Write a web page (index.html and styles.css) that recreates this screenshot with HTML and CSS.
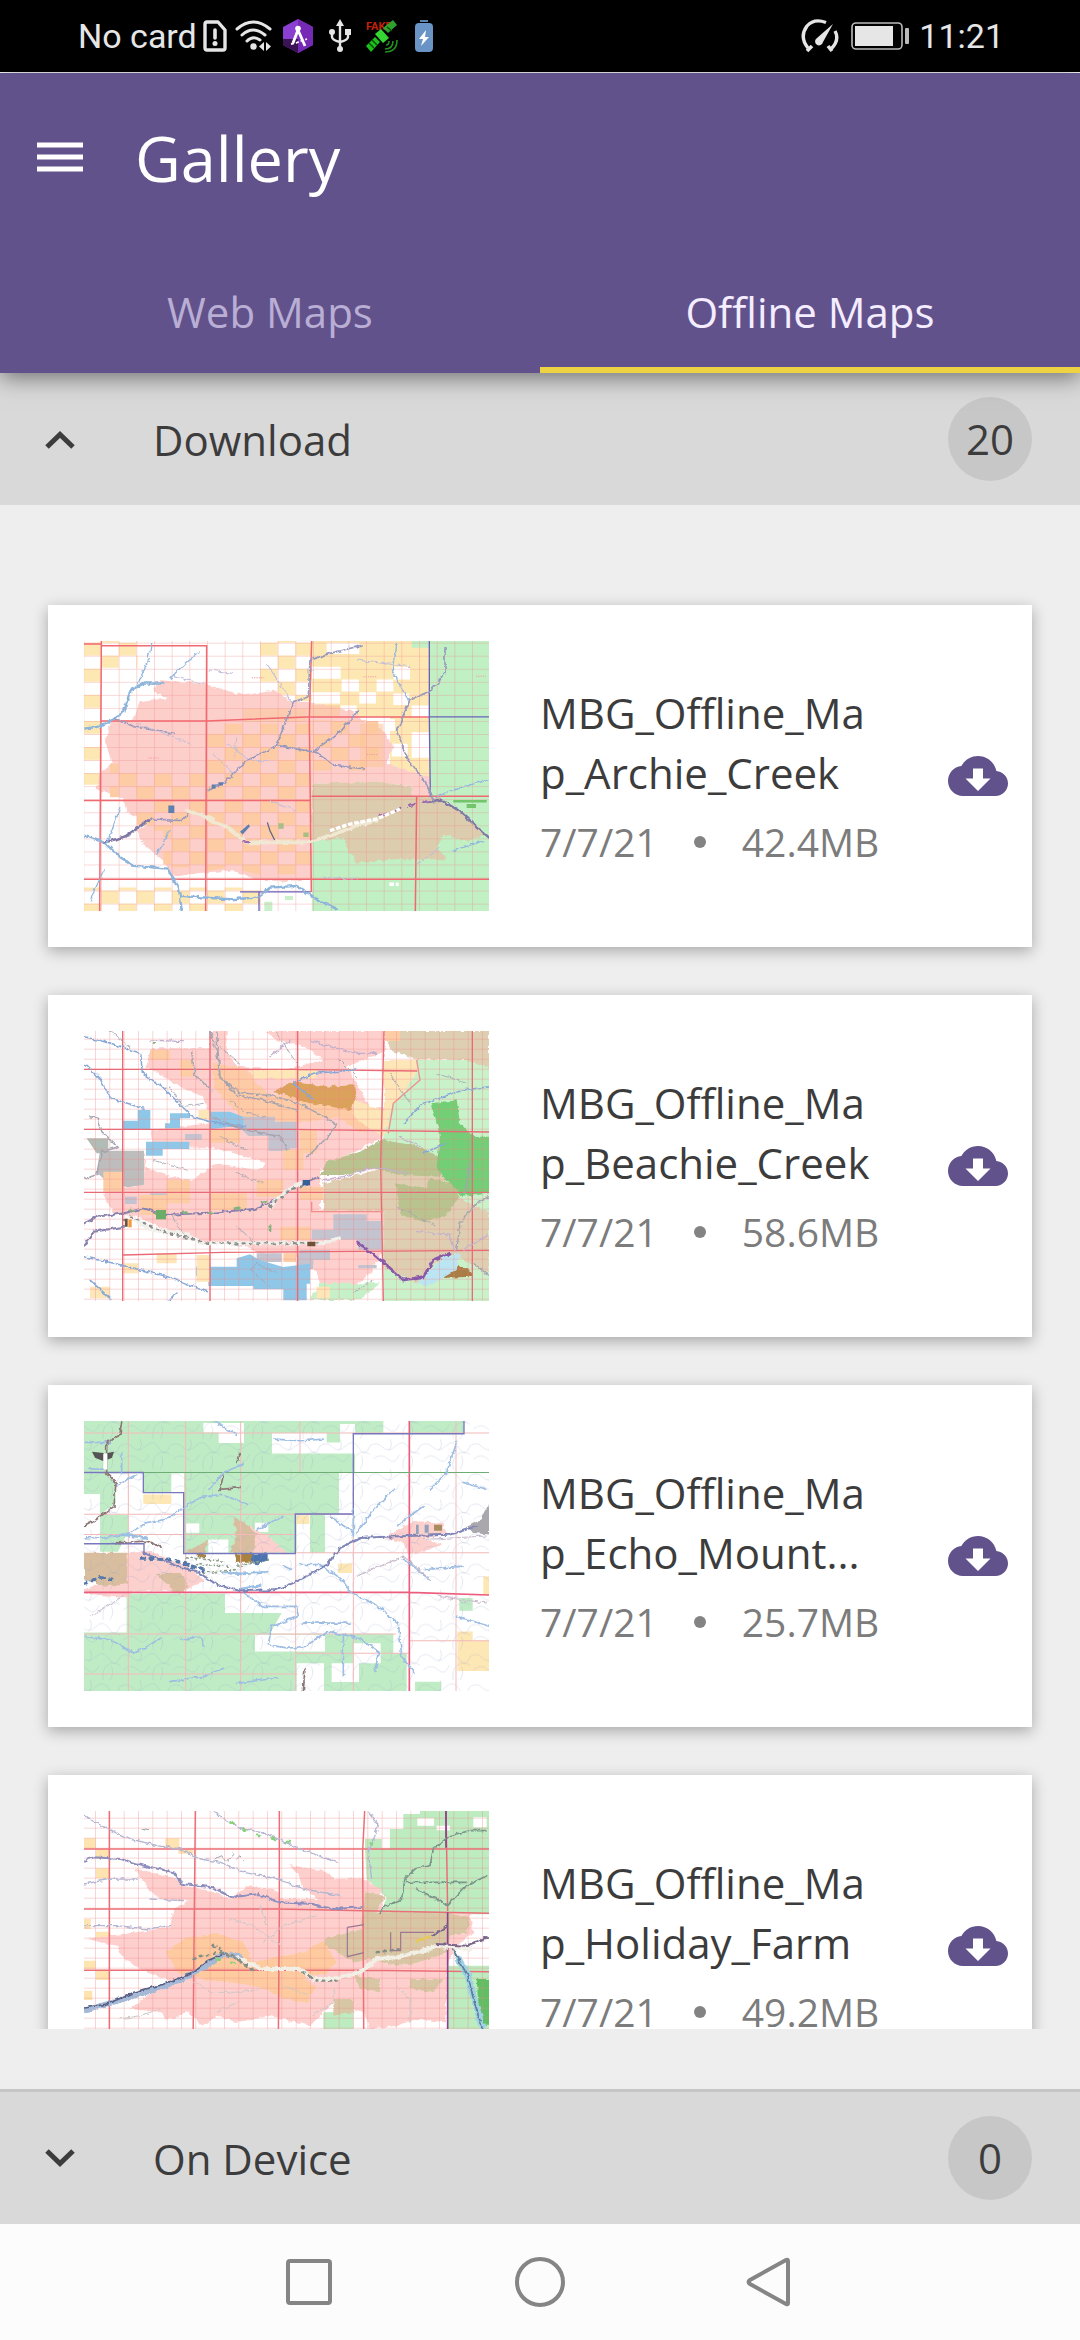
FILE: index.html
```html
<!DOCTYPE html>
<html lang="en">
  <head>
    <meta charset="UTF-8" />
    <meta name="viewport" content="width=device-width, initial-scale=1" />
    <title>Gallery</title>
    <link rel="stylesheet" href="styles.css">
  </head>
  <body>
    <!-- Status bar -->
    <div class="status-bar">
      <div class="status-left">
        <span>No card</span>
        <svg class="sim" width="24" height="32" viewBox="0 0 24 32"><path d="M4 2h11l7 8v18q0 2-2 2H4q-2 0-2-2V4q0-2 2-2z" fill="none" stroke="#e6e6e6" stroke-width="3.4" stroke-linejoin="round"/><path d="M12 10v8" stroke="#e6e6e6" stroke-width="3.6" stroke-linecap="round"/><circle cx="12" cy="23.500" r="2.500" fill="#e6e6e6"/></svg>
        <svg class="wifi" width="38" height="32" viewBox="0 0 38 32"><g fill="none" stroke="#e6e6e6" stroke-width="3" stroke-linecap="round"><path d="M2 9Q18-5 35 9"/><path d="M7 15Q18 5 30 15"/><path d="M12 21Q18 15 25 20"/></g><circle cx="18.500" cy="26.500" r="3.200" fill="#e6e6e6"/><path d="M29 22v9l-5-4.500zM31 22v9l5-4.500z" fill="#e6e6e6"/></svg>
        <svg class="hex" width="30" height="34" viewBox="0 0 30 34"><path d="M15 0l15 8v18l-15 8L0 26V8z" fill="#8a3fd0"/><path d="M15 0l15 8v18l-15 8z" fill="#7629b5"/><path d="M0 20h15v14L0 26z" fill="#3b1456"/><path d="M15 11L10 24M15 11l7 16" fill="none" stroke="#fff" stroke-width="2.800"/><circle cx="15" cy="9.500" r="2.800" fill="#fff"/><path d="M8 25l5-1 5-2 6-2" fill="none" stroke="#fff" stroke-width="1.800" stroke-dasharray="3 2"/></svg>
        <svg class="usb" width="22" height="34" viewBox="0 0 22 34"><path d="M11 4v25M3 13v5q0 3 8 5q8-2 8-5v-5" fill="none" stroke="#e6e6e6" stroke-width="2.400"/><path d="M11 0l4 7H7z" fill="#e6e6e6"/><circle cx="3" cy="13" r="3" fill="#e6e6e6"/><path d="M16 10h6v6h-6z" fill="#e6e6e6"/><circle cx="11" cy="30" r="3" fill="#e6e6e6"/></svg>
        <svg class="sat" width="34" height="34" viewBox="0 0 34 34"><text x="1" y="11" class="fake">FAKE</text><path d="M28 1l4 5-9 8-5-5z" fill="#2fa12d"/><path d="M1 27l9-9 5 5-9 10z" fill="#1fbf1d"/><path d="M4 24l5 5M7 21l5 5M22 8l5 4" stroke="#075207" stroke-width="1.500"/><path d="M10 15l6-5 8 9-6 5z" fill="#35d833"/><path d="M21 26q3 0 3-4M20 30q8 0 8-8M20 33q12 0 12-12" fill="none" stroke="#239022" stroke-width="1.600"/></svg>
        <svg class="charge" width="18" height="32" viewBox="0 0 18 32"><path d="M5 0h8v2H5z" fill="#5d82ad"/><rect y="3" width="18" height="29" rx="4" fill="#6a93c6"/><path d="M11 10l-7 9h4l-2 7 8-9h-4z" fill="#fff"/></svg>
      </div>
      <div class="status-right">
        <svg width="38" height="34" viewBox="0 0 38 34"><g fill="none" stroke="#e6e6e6" stroke-width="3.400"><path d="M25 3.500Q13-1 6 7Q-2 18 7 29"/><path d="M34 12Q39 21 30 30"/></g><path d="M6 32l5-5M27 27l4 5" stroke="#e6e6e6" stroke-width="3.600"/><path d="M32 5L22 23a4 4 0 1 1-6-4z" fill="#e6e6e6"/></svg>
        <svg class="battery" width="58" height="28" viewBox="0 0 58 28"><rect x="1" y="1" width="50" height="26" rx="4" fill="none" stroke="#bbb" stroke-width="1.600"/><rect x="4" y="4" width="38" height="20" fill="#e6e6e6"/><rect x="54" y="6" width="4" height="16" rx="1" fill="#bbb"/></svg>
        <span>11:21</span>
      </div>
    </div>

    <!-- App bar -->
    <header class="app-bar">
      <div class="toolbar">
        <button class="icon-btn" aria-label="Menu">
          <svg width="46" height="30" viewBox="0 0 46 30"><path d="M0 3h46M0 15h46M0 27h46" stroke="#fff" stroke-width="5"/></svg>
        </button>
        <h1 class="title">Gallery</h1>
      </div>
      <nav class="tabs">
        <button class="tab">Web Maps</button>
        <button class="tab active">Offline Maps</button>
      </nav>
    </header>

    <button class="section-bar">
      <svg width="48" height="48" viewBox="0 0 48 48"><path d="M11 32l13-12.500L37 32" fill="none" stroke="#3c3c3c" stroke-width="5"/></svg>
      <span class="section-name">Download</span>
      <span class="count">20</span>
    </button>

    <!-- Map list -->
    <main class="panel">
      <div class="list">
        <article class="card">
          <svg class="thumb" viewBox="42 33 1215 807" preserveAspectRatio="none">
            <defs>
              <filter id="rough" x="-5%" y="-5%" width="110%" height="110%"><feTurbulence type="fractalNoise" baseFrequency="0.06" numOctaves="3" seed="4"/><feDisplacementMap in="SourceGraphic" scale="14" xChannelSelector="R" yChannelSelector="G"/></filter>
              <pattern id="grid" width="53" height="39" x="40" y="38" patternUnits="userSpaceOnUse"><path d="M0 0H53M0 0V39" fill="none" stroke="#f08f8f" stroke-width="3" opacity=".7"/></pattern>
              <pattern id="gridS" width="43" height="30" x="32" y="26" patternUnits="userSpaceOnUse"><path d="M0 0H43M0 0V30" fill="none" stroke="#ee8080" stroke-width="3" opacity=".65"/></pattern>
              <pattern id="checkY" width="106" height="78" x="40" y="38" patternUnits="userSpaceOnUse"><path d="M0 0h53v39H0zM53 39h53v39H53z" fill="#fde8b4"/></pattern>
              <pattern id="checkO" width="106" height="78" x="40" y="38" patternUnits="userSpaceOnUse"><path d="M0 0h53v39H0zM53 39h53v39H53z" fill="#fdcba4"/></pattern>
              <pattern id="creeks" width="150" height="90" patternUnits="userSpaceOnUse"><path d="M0 20q20-14 38 4t40-4 40 8 32-8M10 60q24-20 44 0t34-14M100 90q-6-30 12-44t38 0M60 0q10 20-4 34M120 90q14-20 4-40" fill="none" stroke="#8f9fc8" stroke-width="1.500" opacity=".45"/></pattern>
              <path id="cloud" d="M19.350 10.040C18.670 6.590 15.640 4 12 4 9.110 4 6.600 5.640 5.350 8.040 2.340 8.360 0 10.910 0 14c0 3.310 2.690 6 6 6h13c2.760 0 5-2.240 5-5 0-2.640-2.050-4.780-4.650-4.960zM17 13l-5 5-5-5h3V9h4v4h3z"/>
            </defs>
            <path fill="#fff" d="M42 33h1215v810H42z"/>
            <path fill="#fde8b4" d="M725 33h355v420H960V260H725z"/>
            <path fill="#fff" d="M770 38h98v34h-98zM720 110h92v36h-92zM815 148h52v36h-52zM868 186h50v34h-50zM720 186h90v34h-90zM812 226h48v36h-48zM970 110h50v38h-50zM970 190h48v34h-48zM1025 226h53v36h-53zM920 266h55v36h-55zM1025 306h53v76h-53zM965 340h48v38h-48zM920 148h50v36h-50z"/>
            <path fill="url(#checkY)" d="M570 33h155v180H570zM42 33h50v430H42zM92 33h110v80H92zM42 770h530v70H42zM660 670h65v75h-65z"/>
            <path fill="#c0f0c4" d="M1080 33h177v810H725V610h355zM1025 33h60v20h-60z"/>
            <path fill="#fff" d="M570 785h155v55H570z"/>
            <path fill="#c9efcb" d="M583 812h24v28h-24zM645 795h24v12h-24z"/>
            <g filter="url(#rough)">
              <path fill="#fdcfcb" d="M270 150L400 160L520 195L620 180L665 215L715 215L810 235L850 245L880 270L940 300L970 350L950 400L1080 440V497H1025V467L920 455L725 460V745L640 752L560 745L480 720L400 725L310 738L280 690L220 640L200 600L240 580L170 545L160 505L80 475L90 430L125 400L105 330L125 270H190L210 212L290 205L250 180z"/>
              <path fill="#dccdae" d="M725 460L920 454L1025 468V498H1105L1170 540L1247 612L1190 630L1120 612L1100 650L1130 685L980 685L860 695L830 650L820 620L725 632z"/>
            </g>
            <path fill="url(#checkO)" d="M410 280h310v450H560l-80-20-70 10zM200 430h210v280H280V600H200zM120 400h80v100h-80zM725 270h200v150H725z"/>
            <path fill="#fcc79b" opacity=".6" d="M520 235h190v40H520zM720 225h90v35h-90zM870 280h70v130h-70z"/>
            <path fill="url(#grid)" d="M42 33h1215v810H42z"/>
            <g fill="none" stroke="#f06870" stroke-width="4.500"><path d="M94 33l-5 807M410 45l-3 795M725 33l-7 230 6 520M42 42h50M92 47h320M92 272h318l300-12h370M42 510h680M725 497h532M42 745h1215M1040 497l-4 343"/></g>
            <g fill="none" stroke="#6a62bb" stroke-width="4"><path d="M1078 33v230l3 235M1080 260h177M510 783h212M567 783v57"/></g>
            <g filter="url(#rough)" fill="none" stroke-linecap="round">
              <path stroke="#8db4da" stroke-width="7" d="M42 295l40-5 50-25 30-20 20-65 40-20h60M42 615l60 20 50 45 40 25 100 8 35 60 8 67M330 795l150 10 80-5 40-30 80-5 60 40 60 30"/>
              <path stroke="#9999bd" stroke-width="5" d="M105 635l70-20 70-50 90 5 20-20M415 480l50-25 60-60 95-50 30-80 20-50 45-15 5-110 60-20 100-25M620 345l115 20 60 40 90 10M735 360l80-60 50-60M135 265l60 25 120 20M1125 50v80l-40 50-65 30-40 90 30 80 60 80 25 60"/>
              <path stroke="#7f76a4" stroke-width="7" d="M1075 515l35-8 60 35 60 55 35 30M105 635l60-18 70-48"/>
              <path stroke="#93b7de" stroke-width="4" d="M300 145l50-50 40-30M245 40l-15 60-30 70M965 120l50 90M980 40l-10 80M1100 500l30-15 80-25 45-12M110 640l40-110M60 810l40-90M300 600l-40 70M1150 660l90-30"/>
              <path stroke="#c3bdd6" stroke-width="3" d="M310 140l90 20M590 100l75 115M420 120l70 10M470 340l70 50 60 0M200 280l160 60M430 370l60 60M760 740l100 5M1040 700l70-50M860 90l160 20M500 320l-5 60M600 510l80 30"/>
              <path stroke="#f0e8d2" stroke-width="11" d="M350 540l60 20 60 30 60 45 180 0 70-20 80-30 60-15"/>
              <path stroke="#a06ab0" stroke-width="7" stroke-dasharray="18 28" d="M520 632l30 5M930 555l60-20 60-20 40-5"/>
            </g>
            <path fill="#5f7fae" d="M295 525h18v22h-18zM425 462h12v12h-12zM445 455h14v10h-14zM510 603l26-22 4 6-22 24z"/>
            <path fill="#74c46b" d="M1150 508h100v8h-100zM1190 520h28v12h-28z"/><path fill="#a9bd85" d="M625 578h16v16h-16zM700 605h16v14h-16z"/>
            <path fill="none" stroke="#668" stroke-width="4" d="M592 575l8 25 14 28"/>
            <path fill="none" stroke="#fff" stroke-width="10" stroke-dasharray="14 5" d="M780 600l60-20 80-15 70-30M958 760h28"/>
            <path fill="none" stroke="#f5a0a0" stroke-width="3" stroke-dasharray="4 3" d="M545 143h38M880 140h40M1218 138h30M235 383h35M890 372h35"/>
          </svg>
          <div class="info">
            <h2 class="name">MBG_Offline_Map_Archie_Creek</h2>
            <p class="meta"><span>7/7/21</span><i class="dot"></i><span>42.4MB</span></p>
          </div>
          <button class="icon-btn" aria-label="Download map">
            <svg class="cloud" viewBox="0 0 24 24"><use href="#cloud"/></svg>
          </button>
        </article>

        <article class="card">
          <svg class="thumb" viewBox="42 33 1215 810" preserveAspectRatio="none">
            <path fill="#fff" d="M42 33h1215v810H42z"/>
            <path fill="#c9f1ca" d="M960 120h297v723H940V330z"/>
            <g filter="url(#rough)">
              <path fill="#fdcfcd" d="M240 85L420 85V33H945V330L940 350L750 450V570H940V690L900 760L850 800L750 790L720 720L640 700H560L540 680L420 670L290 630L200 590L130 580L100 520L220 490V400L250 380L240 330L420 310L400 230L330 200L230 140z"/>
              <path fill="#fff" d="M470 33H590L620 60L700 80L760 120L640 150L500 140L470 90zM225 385L290 380L440 385L590 430L560 450L440 430L370 480L300 470L225 440zM830 140L942 95V260L900 265L870 210z"/>
              <path fill="#decfb2" d="M945 33H1257V143L1190 120L1040 118L960 90zM760 490L920 450L1110 450L1180 540L1257 580V760L1140 700L1080 740L1040 790L940 740V573H760z"/>
              <path fill="#fdccA6" d="M430 130L530 150L560 190L600 225L690 230L850 270L900 330L870 340L800 290L680 310L510 290L430 200z"/>
              <path fill="#fde6b8" d="M540 150h200v26H550zM850 240L942 270V120L1040 120L1045 150L1000 220L965 260L945 350L905 330L850 290z"/>
              <path fill="#dba25c" d="M610 215l50-30 120 15 75-5 5 35-20 40-120-20z"/>
              <path fill="#b8c38f" d="M750 465l20-40 100-30 60-35 100 15 100 45-20 50-120-5-80-20-90 20zM975 490l100 15 0-30 90 20 0 40-40 55-70 15-60-20z"/>
              <path fill="#72cf76" d="M1085 250l75-10 10 70 40 40h50v170l-80 10-60-60-20-30 10-90z"/>
              <path fill="#a97d45" d="M1090 775l80-40 35 20v15z"/>
              <path fill="#bce5f3" d="M1040 790l80-80 50-10-10 50-90 50z"/>
              <path fill="#c6f1c8" d="M750 790h180l-60 50h-150z"/>
            </g>
            <path fill="#bdbdbd" d="M90 392h132v102l-50 8-60-15-32-30z"/>
            <path fill="#b2bcb6" d="M50 355h65v45H80z"/>
            <path fill="#c4c3d0" d="M520 290h95v15h65v80h-20v8h-65v-45h-60l-20-20zM345 342h50v18h-50zM790 583h100v20h45v86h-70v-30H725v-30h65zM690 690h90v30h-50v28h-50v-26zM560 700h75v26h-75zM240 520h80v26h-80zM165 530h35v22h-35zM865 735h55v10h-55z"/>
            <path fill="#8fc7e8" d="M420 275h60l40 15v30h-40l-60 8zM203 270h38v60h-82v-28h44zM300 280h60v15h-30v30h-45v-15h15zM228 365h130v22h-80v20h-50zM500 715l40-12 30 18 70 20 80-10v60h-10v50h-70v-33H550v-10H415v-30h-37v-28h122z"/>
            <path fill="#fdcda6" d="M240 90h60v30h-60zM330 120h40v50h-40zM420 330h90v38h-90zM640 390h60v60h-60zM560 480h80v50h-80zM290 480h70v70h-70zM420 520h110v50h-110zM630 620h90v40h-90zM640 700h38v26h-38zM210 525h80v60h-80zM690 330h50v70h-50zM100 455h60v60h-60zM690 500h70v40h-70zM945 33h45v30h-45z"/>
            <path fill="#fde6b8" d="M260 700h60v30h-60zM160 730h45v30h-45zM380 705h40v80h-40zM385 270h35v28h-35zM740 800h40v35h-40zM60 800h60v35H60z"/>
            <path fill="url(#gridS)" d="M42 33h1215v810H42z"/>
            <g fill="none" stroke="#e96a76" stroke-width="4"><path d="M158 33v810M420 33v810M683 33v810M942 33l-10 400 8 410M1207 33v810M42 148h640l360 5M42 328h620l595 8M42 517h1215M160 705l300-8 797-6"/></g>
            <path fill="none" stroke="#f28d8d" stroke-width="4" d="M725 545v30h215M1040 120l10 60-80 70-15 90"/>
            <g filter="url(#rough)" fill="none" stroke-linecap="round">
              <path stroke="#87a8d6" stroke-width="4.500" d="M42 50l80 20 90 30 5 60 60 40 90 90 70 20 90 10M42 130l50 50 30 55 100 30M42 710l90 20 160 40 120 45M60 780l60 55M320 820l-20 20M1000 310l60-60 120-40 77-10M730 240l-60-50 60-30 130-10M1060 400l70-30"/>
              <path stroke="#a7a4b0" stroke-width="4.500" d="M420 33l20 60 10 80 60 45 100 10 70 20 60 30 60 35-30 40-60 60M440 40l10 130 50 55 80 15 100 30M420 290l110 40 100 20 20 40M60 290l25 5 10 40 50 45-50 15-15 70-35 10M365 95l10 70 50 45M1160 690l10-80 40-50 45-30M1200 430l-15 90M1210 730l45 35"/>
              <path stroke="#c3afcd" stroke-width="4" d="M720 60l60 20 80 20 60 0M600 110l60-50M240 60l100 5M760 480l60-10 100-30 90 20M1050 380l-60-30M1180 690l75-45M1040 635l100 10 15 50"/>
              <path stroke="#8982ad" stroke-width="6" d="M42 610l40-20 80-10 60-15 60 20 160-8 110-10 60-25 80-50 50-20M42 680l30-45 90-15"/>
              <path stroke="#8a59a8" stroke-width="8" d="M860 665l40 30 50 40 50 45 60-10 30-50 50-20"/>
              <path stroke="#f1f0ea" stroke-width="12" d="M190 600l60 30 90 10 60 30h350l60-15M600 560l40-40 50-30"/>
              <path stroke="#8b8d8a" stroke-width="7" stroke-dasharray="6 16" d="M180 590l100 45 80 20 60 15h330M600 560l60-50 60-20M160 600h20"/>
              <path stroke="#82b37c" stroke-width="8" stroke-dasharray="10 70" d="M180 570l90 10 190-5 160-40M250 70h4M600 620v20"/>
              <path stroke="#a3a4b2" stroke-width="2.500" d="M120 33l60 50M300 200l40 60 60-10M480 240l50 40 60 10M450 350l80 40M250 420l100 30M500 460l80 30M500 620l60 50M600 800l-60-50 20-20 60 30M800 110l60 60M960 160l60 90M1100 160l90 30M850 820l60-40M450 80l60 50M620 40l60 90M300 580l40 60M980 560l120 60"/>
            </g>
            <path fill="#6bac69" d="M258 570h30v28h-30z"/><path fill="#35609a" d="M698 480h22v16h-22z"/><path fill="#6d5238" d="M712 665h24v14h-24zM165 596h8v24h-8z"/><path fill="#f29a40" d="M175 598h10v24h-10z"/>
          </svg>
          <div class="info">
            <h2 class="name">MBG_Offline_Map_Beachie_Creek</h2>
            <p class="meta"><span>7/7/21</span><i class="dot"></i><span>58.6MB</span></p>
          </div>
          <button class="icon-btn" aria-label="Download map">
            <svg class="cloud" viewBox="0 0 24 24"><use href="#cloud"/></svg>
          </button>
        </article>

        <article class="card">
          <svg class="thumb" viewBox="42 36 1215 807" preserveAspectRatio="none">
            <path fill="#fff" d="M42 33h1215v810H42z"/>
            <path fill="#c0ecc5" d="M42 36H940V72H855V190H807V314H765V430H342V192H304V250H220V192H42z"/>
            <path fill="#fff" d="M680 314H720V432H680z"/>
            <path fill="#c0ecc5" d="M42 192h65l30 30v60l-48 35h85v50l-30 60H90V255H42zM1018 36h164v38h-164zM42 668H170V552H465V610H635L600 672H970V730H1010V843H42zM1168 565h40v38h-40zM1035 815h78v28h-78z"/>
            <path fill="#fff" d="M400 42h122v60h-76V70h-46zM606 72h164v28h40V45h45v88H606zM42 255h47v60H42zM348 342h40v28h-40zM555 675h210v50H555zM850 700h82v60h-82zM680 760h82v83h-82zM785 760h82v56h-82zM415 390h60v40h-60zM555 340h40v28h-40z"/>
            <path fill="#fde7b4" d="M220 256h84v28h-84zM680 318h38v26h-38zM804 462h42v28h-42zM1162 665h46v28h49v90h-95zM1240 500h17v56h-17z"/>
            <g filter="url(#rough)">
              <path fill="#fcd0cd" d="M42 540L120 510L170 432L240 424L360 474L405 515L340 545H200L165 562L42 552zM540 350L600 385L650 430H520zM940 385L1030 335L1120 340L1130 375L1060 388L1120 405L1060 425L1015 435L1000 400z"/>
              <path fill="#d8be9f" d="M42 430h130v90l-60 10-70-20zM255 490l80 0 20 40-30 25zM490 320l40 25 30 30-10 55h-70l20-50zM345 430l70-40-10 40z"/>
              <path fill="#4c73ae" d="M535 432h58v20l-30 12-30-8z"/>
              <path fill="#a9823f" d="M490 432h55v28h-45zM380 432h28v14h-28z"/>
              <path fill="#aaa8ac" d="M1195 350l40-20 22-45v90l-50-5z"/>
            </g>
            <path fill="url(#creeks)" d="M42 33h1215v810H42z"/>
            <path fill="none" stroke="#f2b9b9" stroke-width="3" d="M175 36v807M347 36v807M512 36v807M690 36v154M677 315v528M850 190v653M1158 36v807M42 72h1215M42 315h810M42 375h635M680 430h577M42 673h935M677 730h340M1018 693h239M42 792h640"/>
            <path fill="none" stroke="#ec5c7c" stroke-width="5" d="M1018 36v807M42 548h975l240 8"/>
            <path fill="none" stroke="#6eae74" stroke-width="3" d="M42 190h1215"/>
            <path fill="none" stroke="#7777bd" stroke-width="4" d="M42 190h178v60h121v182h335V314h174V74h332V36M42 403h180v28"/>
            <g filter="url(#rough)" fill="none" stroke-linecap="round">
              <path stroke="#9dbde3" stroke-width="5" d="M42 385h60l70-10 50-30 80-20 30-25 60-35 60-10 80 30M42 100h80M155 130v60M420 240l40-50 60-25M60 180l40 0M430 36l70 40M610 90l80 5 70-5M140 230l60-35M660 480l-20-10M690 465h60l60 40 35 45 80 40 60 50 10 100 40 50M520 550l60 40 100 0 5 30-80 30-10 55 60 10 50-5 70-45 90 20 60 40-10 60M560 360l80-40M850 300v80M860 370l60-80 50-50M980 350l80-60M1080 240l50-50 30-90M780 320l70 50M1000 450l80 60M1060 480l120-10M42 680l80 10 70 40 40-20 40-25M330 690l60-10 10 30M300 815l100-15 60-25M500 820l120-15M1180 220l70 20M1160 620l100 30M820 680v120M700 640l140 0"/>
              <path stroke="#7f85b7" stroke-width="6" d="M220 430l100 40 60 15 60 40 70 20 110-4 60-25 90-50 40-50 60-30 90-5 180-5 80-25"/>
              <path stroke="#8c7777" stroke-width="5" d="M155 36l-5 40-40 25v90l28 30-6 70-60 45-30 15M140 400l90-5 40 15M510 130l-10 30M460 200l-10 40 60-5M700 843l5-70"/>
              <path stroke="#9bbfe4" stroke-width="8" d="M150 375l80 10M460 490l60 3 70-5M510 538l60-10"/>
              <path stroke="#5577a9" stroke-width="11" stroke-dasharray="8 18" d="M215 445l90 5 90 30 20 10M42 520l50-15 40 5"/>
              <path stroke="#8ea089" stroke-width="5" stroke-dasharray="4 9" d="M350 445l110 10M380 465l100 5M400 490l100-10M500 470l100-20"/>
              <path stroke="#c8b9cb" stroke-width="3" d="M860 500l140-60 80 70M1060 390l190-10M1100 560l150 20M60 620l100-60"/>
            </g>
            <path fill="#555" d="M66 128l35 4v24l-26-10zM132 128l-20 4v20l14-6z"/>
            <path fill="#fff" d="M100 134h12v46h-12z"/>
            <path fill="#8fa2ba" d="M1038 346h8v28h-8zM1064 346h12v24h-12z"/><path fill="#a98d60" d="M1092 346h24v18h-24z"/>
          </svg>
          <div class="info">
            <h2 class="name">MBG_Offline_Map_Echo_Mount...</h2>
            <p class="meta"><span>7/7/21</span><i class="dot"></i><span>25.7MB</span></p>
          </div>
          <button class="icon-btn" aria-label="Download map">
            <svg class="cloud" viewBox="0 0 24 24"><use href="#cloud"/></svg>
          </button>
        </article>

        <article class="card">
          <svg class="thumb" viewBox="42 36 1215 810" preserveAspectRatio="none">
            <path fill="#fff" d="M42 33h1215v813H42z"/>
            <path fill="#fde4b0" d="M42 118h35v30H42zM286 118h42v30h-42zM78 150h40v30H78zM325 150h45v14h-45zM78 208h40v30H78zM42 360h20v30H42zM78 398h40v25H78zM42 485h35v25H42zM78 515h40v28H78zM42 575h25v28H42z"/>
            <path fill="#bcecc0" d="M885 150H960V90H1000V45H1050V36H1257V346H930L950 296L890 240zM885 120h50v28h-50zM1132 500h125v346h-125zM760 640h90v206h-90z"/>
            <path fill="#fff" d="M1042 58h50v22h-50zM1210 55h40v30h-40zM1100 80h40v14h-40zM1185 450h35v35h-35z"/>
            <g filter="url(#rough)">
              <path fill="#fdd0ce" d="M195 210L260 222L320 240L350 262L440 280L480 300L530 262L610 270L640 300L745 300L700 270L690 230L660 198L760 215L800 240L880 238L930 270L940 340L1200 343L1210 400L1150 450L1132 500V560L1125 670L1040 660L980 680L900 690L880 640L790 610L720 680L600 650L500 670L440 650L400 680L350 640L290 665L270 640L180 630L230 590L310 550L230 520L160 480L140 440L50 420L110 410L200 400L300 385L310 330L360 305L270 300L230 265z"/>
              <path fill="#fdcb9f" d="M290 460L350 415L440 405L520 430L550 490L700 460L760 425L800 490L770 520L700 540L740 560L710 610L650 600L560 560L400 540L320 520z"/>
              <path fill="#d7c7a4" d="M885 280l60 10-30 50 230 0-10 120-90 30-60 10-90-20-40 10-90-50 0-20 110-30zM850 530l80 10 0 40-60-10zM1020 540l100 0-30 40-70-10zM790 600l60 0 0 40-60 10zM1140 345l60 10-10 50-50 0z"/>
              <path fill="#60bf63" d="M1220 540h40v140h-30z"/>
            </g>
            <path fill="url(#gridS)" d="M42 33h1215v813H42z"/>
            <path fill="none" stroke="#eb6f77" stroke-width="4.500" d="M118 36v810M376 36l-8 810M628 36v310l-4 500M884 36l-6 120 4 690M1128 36l5 300M42 150h1215M42 330h580l635 13M42 514h840l375 4"/>
            <path fill="none" stroke="#8b3f8d" stroke-width="5" d="M1133 340v506M1128 36v110"/>
            <path fill="none" stroke="#9f7590" stroke-width="3.500" d="M832 385v88l50-12M962 400v55h30v-55h100M832 385l50-8"/>
            <g filter="url(#rough)" fill="none" stroke-linecap="round">
              <path stroke="#8f8fbf" stroke-width="6" d="M42 185l30-10 80 5 70 20 90 20 25 35 90 10 60 30 80-10 60 25 100 5 60 15 90-5"/>
              <path stroke="#b4b5d2" stroke-width="4" d="M42 50l60 35 80 35 80 20 70 10 60 30 60 10 70 30 100 20 80 30 110 20M430 40l80 45 80 20 100 45 110 40M895 40l30 40-30 80 10 80M42 380l100 0 90 10 70-10M240 300l100 5M42 255l80-15h80"/>
              <path stroke="#7b958b" stroke-width="5" d="M930 340l20-20 45-20 10-60 30-30 45-10 10-50 50-40 60-15 50 0M1130 320l60-60 60-30M1010 250h180M1040 270l90 45"/>
              <path stroke="#cfc6c6" stroke-width="3" d="M480 360l70 20 80 60M580 430l60-50 100-30M370 550l60 30 80 0 60-10M440 640l60-30M570 320l20 60M640 560l80 30M980 560l40 40v70M790 570v40l-60 40M150 660l60-10 60-20"/>
              <path stroke="#a5b8d6" stroke-width="16" d="M42 634l90-25 100-30 100-35 70-40 60-40 50 10"/>
              <path stroke="#575d83" stroke-width="5" d="M42 627l70-12 80-35 90-25 80-30 50-40 50-20"/>
              <path stroke="#f2f0e6" stroke-width="12" d="M500 475l40 20 40 15 110 0 40 30 60 0 80-20 50-40 60-5 80-20 40-15 100 10"/>
              <path stroke="#858d86" stroke-width="7" stroke-dasharray="7 14" d="M370 480l80-20 50 20 60 40M700 520l40 25h60M920 460l70-10M430 440l90 50M1190 440l60-25"/>
              <path stroke="#7d668c" stroke-width="6" d="M1100 435l90 5 60-25M1090 410l40-30"/>
              <path stroke="#9fd3e4" stroke-width="20" d="M1165 480l30 50 20 80 20 70"/>
              <path stroke="#607d9a" stroke-width="5" d="M1148 450l45 80 20 80 25 80"/>
              <path stroke="#88d17c" stroke-width="7" stroke-dasharray="10 35" d="M480 70l80 40 100 20M440 480l60 15M900 130l20 10"/>
              <path stroke="#e3c95e" stroke-width="8" d="M1040 425l40-12"/>
              <path stroke="#a0a0a8" stroke-width="3" d="M435 180l20-10 10 15M470 185l20-20M500 180l10-10 10 15M215 90l15 5"/>
            </g>
          </svg>
          <div class="info">
            <h2 class="name">MBG_Offline_Map_Holiday_Farm</h2>
            <p class="meta"><span>7/7/21</span><i class="dot"></i><span>49.2MB</span></p>
          </div>
          <button class="icon-btn" aria-label="Download map">
            <svg class="cloud" viewBox="0 0 24 24"><use href="#cloud"/></svg>
          </button>
        </article>
      </div>
    </main>

    <button class="section-bar bottom">
      <svg width="48" height="48" viewBox="0 0 48 48"><path d="M11 17l13 12.500L37 17" fill="none" stroke="#3c3c3c" stroke-width="5"/></svg>
      <span class="section-name">On Device</span>
      <span class="count">0</span>
    </button>

    <!-- System navigation -->
    <nav class="nav-bar">
      <button class="icon-btn" aria-label="Recent apps"><svg width="50" height="50" viewBox="0 0 50 50"><rect x="4" y="4" width="42" height="42" rx="2"/></svg></button>
      <button class="icon-btn" aria-label="Home"><svg width="50" height="50" viewBox="0 0 50 50"><circle cx="25" cy="25" r="23"/></svg></button>
      <button class="icon-btn" aria-label="Back"><svg width="50" height="50" viewBox="0 0 50 50"><path d="M42 4v42q0 2-2 1L4 27q-3-2 0-4L40 3q2-1 2 1z"/></svg></button>
    </nav>
  </body>
</html>
```
FILE: styles.css
```css
* {
  box-sizing: border-box;
}

body {
  margin: 0;
  height: 100vh;
  display: flex;
  flex-direction: column;
  overflow: hidden;
  background: #eeeeee;
  color: #3c3c3c;
  font-family: "Open Sans", "Noto Sans", sans-serif;
}

button {
  margin: 0;
  padding: 0;
  border: none;
  background: none;
  color: inherit;
  font: inherit;
  cursor: pointer;
}

svg {
  display: block;
  flex: none;
}

.icon-btn {
  flex: none;
  display: flex;
}

/* status bar */
.status-bar {
  flex: none;
  height: 73px;
  padding: 0 76px 0 78px;
  display: flex;
  justify-content: space-between;
  background: #000;
  border-bottom: 1px solid #fff;
  color: #e6e6e6;
  font-family: Roboto, sans-serif;
  font-size: 34px;
}

.status-left,
.status-right {
  display: flex;
  align-items: center;
}

.sim {
  margin-left: 6px;
}

.wifi {
  margin-left: 8px;
}

.hex {
  margin-left: 10px;
}

.usb {
  margin-left: 16px;
}

.sat {
  margin-left: 14px;
}

.charge {
  margin-left: 16px;
}

.fake {
  fill: #c22208;
  font-size: 11px;
  font-weight: bold;
}

.battery {
  margin: 0 10px 0 12px;
}

/* app bar */
.app-bar {
  flex: none;
  position: relative;
  z-index: 1;
  background: #62528c;
  color: #fff;
  box-shadow: 0 4px 22px rgba(0, 0, 0, 0.5);
}

.toolbar {
  height: 168px;
  padding: 0 37px;
  display: flex;
  align-items: center;
  gap: 52px;
}

.title {
  margin: 0;
  font-size: 63px;
  font-weight: 400;
}

.tabs {
  height: 132px;
  display: flex;
}

.tab {
  flex: 1;
  padding-top: 14px;
  border-bottom: 6px solid transparent;
  color: #b9aed4;
  font-size: 42px;
}

.tab.active {
  color: #f4ecff;
  border-bottom-color: #edd243;
}

/* section headers */
.section-bar {
  flex: none;
  height: 132px;
  padding: 0 48px 0 36px;
  display: flex;
  align-items: center;
  background: #d9d9d9;
  font-size: 42px;
  text-align: left;
}

.section-bar.bottom {
  height: 135px;
  border-top: 3px solid #c5c5c5;
}

.section-name {
  flex: 1;
  padding-left: 69px;
}

.count {
  width: 84px;
  height: 84px;
  border-radius: 50%;
  background: #c7c7c7;
  line-height: 84px;
  text-align: center;
}

/* map list */
.panel {
  flex: 1;
  min-height: 0;
  padding-bottom: 60px;
}

.list {
  height: 100%;
  padding: 100px 48px 0;
  display: flex;
  flex-direction: column;
  gap: 48px;
  overflow: hidden;
}

.card {
  flex: none;
  padding: 36px 24px 36px 36px;
  display: flex;
  align-items: center;
  background: #fff;
  box-shadow: 0 4px 14px rgba(0, 0, 0, 0.3);
}

.thumb {
  width: 405px;
  height: 270px;
}

.info {
  flex: 1;
  min-width: 0;
  padding: 2px 72px 0 51px;
}

.name {
  margin: 0;
  font-size: 42px;
  font-weight: 400;
  line-height: 60px;
  word-break: break-all;
}

.meta {
  margin: 9px 0 0;
  display: flex;
  align-items: center;
  gap: 36px;
  color: #7c7c7c;
  font-size: 39px;
  line-height: 60px;
  white-space: nowrap;
}

.dot {
  flex: none;
  width: 12px;
  height: 12px;
  border-radius: 50%;
  background: #838383;
}

.cloud {
  width: 60px;
  height: 60px;
  fill: #62528c;
}

/* system navigation */
.nav-bar {
  flex: none;
  height: 116px;
  display: flex;
  align-items: center;
  justify-content: center;
  gap: 181px;
  background: #fcfcfc;
}

.nav-bar svg {
  fill: none;
  stroke: #858585;
  stroke-width: 4;
}
```
